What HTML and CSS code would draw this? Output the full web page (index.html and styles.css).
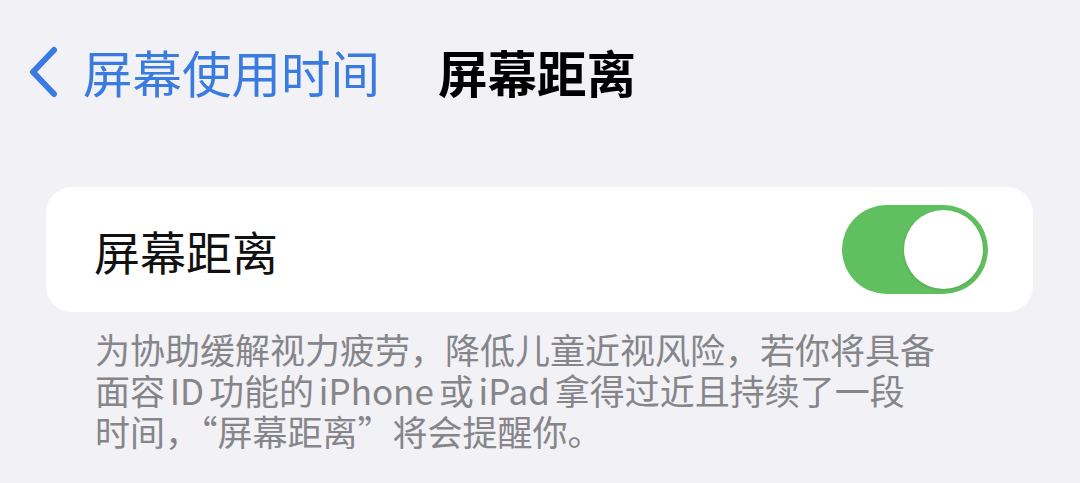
FILE: index.html
```html
<!DOCTYPE html>
<html lang="zh-CN">
<head>
    <meta charset="UTF-8">
    <title>屏幕距离</title>
    <link rel="stylesheet" href="styles.css">
</head>
<body>
    <div class="nav-bar">
        <a href="#" class="back-link">
            <svg class="back-icon" viewBox="0 0 32 52" width="32" height="52">
                <path d="M27 4 L6 26 L27 48" fill="none" stroke="#3a7be0" stroke-width="6" stroke-linecap="round" stroke-linejoin="round"/>
            </svg>
            <span>屏幕使用时间</span>
        </a>
        <h1 class="nav-title">屏幕距离</h1>
    </div>

    <div class="settings-card">
        <div class="row-label">屏幕距离</div>
        <div class="switch is-on">
            <div class="switch-knob"></div>
        </div>
    </div>

    <p class="footnote">
        为协助缓解视力疲劳，降低儿童近视风险，若你将具备<br>
        面容 ID 功能的 iPhone 或 iPad 拿得过近且持续了一段<br>
        时间，“屏幕距离”将会提醒你。
    </p>
</body>
</html>
```

FILE: styles.css
```css
body {
    margin: 0;
    width: 1080px;
    height: 483px;
    overflow: hidden;
    background: #f1f1f6;
    font-family: "Noto Sans CJK SC", "Noto Sans", sans-serif;
}

.nav-bar {
    display: flex;
    align-items: center;
    gap: 58px;
    padding: 44px 0 0 27px;
    height: 56px;
}

.back-link {
    display: flex;
    align-items: center;
    gap: 24px;
    color: #3a7be0;
    text-decoration: none;
    font-size: 49.5px;
    line-height: 56px;
}

.back-icon {
    display: block;
}

.nav-title {
    margin: 0;
    font-size: 49.5px;
    line-height: 56px;
    font-weight: 700;
    color: #000;
}

.settings-card {
    display: flex;
    align-items: center;
    justify-content: space-between;
    margin: 87px 47px 0 46px;
    height: 125px;
    padding: 0 45px 0 48px;
    background: #fff;
    border-radius: 26px;
}

.row-label {
    font-size: 46px;
    color: #111;
}

.switch {
    width: 146px;
    height: 89px;
    border-radius: 45px;
    background: #e4e4e8;
    display: flex;
    align-items: center;
    padding: 0 5px;
    box-sizing: border-box;
}

.switch.is-on {
    background: #60bf5e;
    justify-content: flex-end;
}

.switch-knob {
    width: 79px;
    height: 79px;
    border-radius: 50%;
    background: #fff;
    box-shadow: 0 1px 3px rgba(0, 0, 0, 0.12);
}

.footnote {
    margin: 16px 0 0 95px;
    font-size: 35px;
    line-height: 41px;
    word-spacing: -3px;
    color: #85858a;
}
```
